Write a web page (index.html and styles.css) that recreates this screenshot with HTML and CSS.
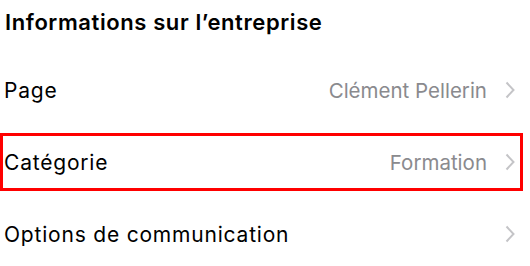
FILE: index.html
```html
<!DOCTYPE html>
<html lang="fr">
<head>
    <meta charset="UTF-8">
    <meta name="viewport" content="width=device-width, initial-scale=1.0">
    <title>Informations sur l'entreprise</title>
    <link rel="stylesheet" href="styles.css">
</head>
<body>

    <!-- Section title -->
    <h2 class="section-title">Informations sur l’entreprise</h2>

    <!-- Settings rows -->
    <div class="settings-list">
        <div class="settings-row">
            <span class="row-label">Page</span>
            <span class="row-value">Clément Pellerin</span>
            <svg class="chevron" viewBox="0 0 10 18" width="10" height="18"><path d="M1.5 1.5 L8.5 9 L1.5 16.5"/></svg>
        </div>
        <div class="settings-row selected">
            <span class="row-label">Catégorie</span>
            <span class="row-value">Formation</span>
            <svg class="chevron" viewBox="0 0 10 18" width="10" height="18"><path d="M1.5 1.5 L8.5 9 L1.5 16.5"/></svg>
        </div>
        <div class="settings-row">
            <span class="row-label">Options de communication</span>
            <span class="row-value"></span>
            <svg class="chevron" viewBox="0 0 10 18" width="10" height="18"><path d="M1.5 1.5 L8.5 9 L1.5 16.5"/></svg>
        </div>
    </div>

</body>
</html>
```

FILE: styles.css
```css
/* General reset */
* {
    margin: 0;
    padding: 0;
    box-sizing: border-box;
}

body {
    background-color: #FFF;
    color: #000;
    font-family: Inter, "Noto Sans", sans-serif;
}

/* Section title */
.section-title {
    font-size: 22px;
    font-weight: 600;
    letter-spacing: 0.6px;
    line-height: 26px;
    padding: 9px 0 0 5px;
    height: 61px;
}

/* Rows */
.settings-list {
    display: flex;
    flex-direction: column;
    gap: 14px;
    margin-right: 7px;
}

.settings-row {
    display: flex;
    align-items: center;
    height: 58px;
    padding: 0 5px 0 1px;
    border: 3px solid transparent;
    font-size: 21px;
}

.settings-row.selected {
    border-color: #F00;
}

.row-label {
    flex: 1;
    letter-spacing: 0.8px;
}

.row-value {
    color: #8A8A8E;
    font-size: 20.5px;
    margin-right: 18px;
}

.chevron {
    fill: none;
    stroke: #C4C4C7;
    stroke-width: 2;
}
```
